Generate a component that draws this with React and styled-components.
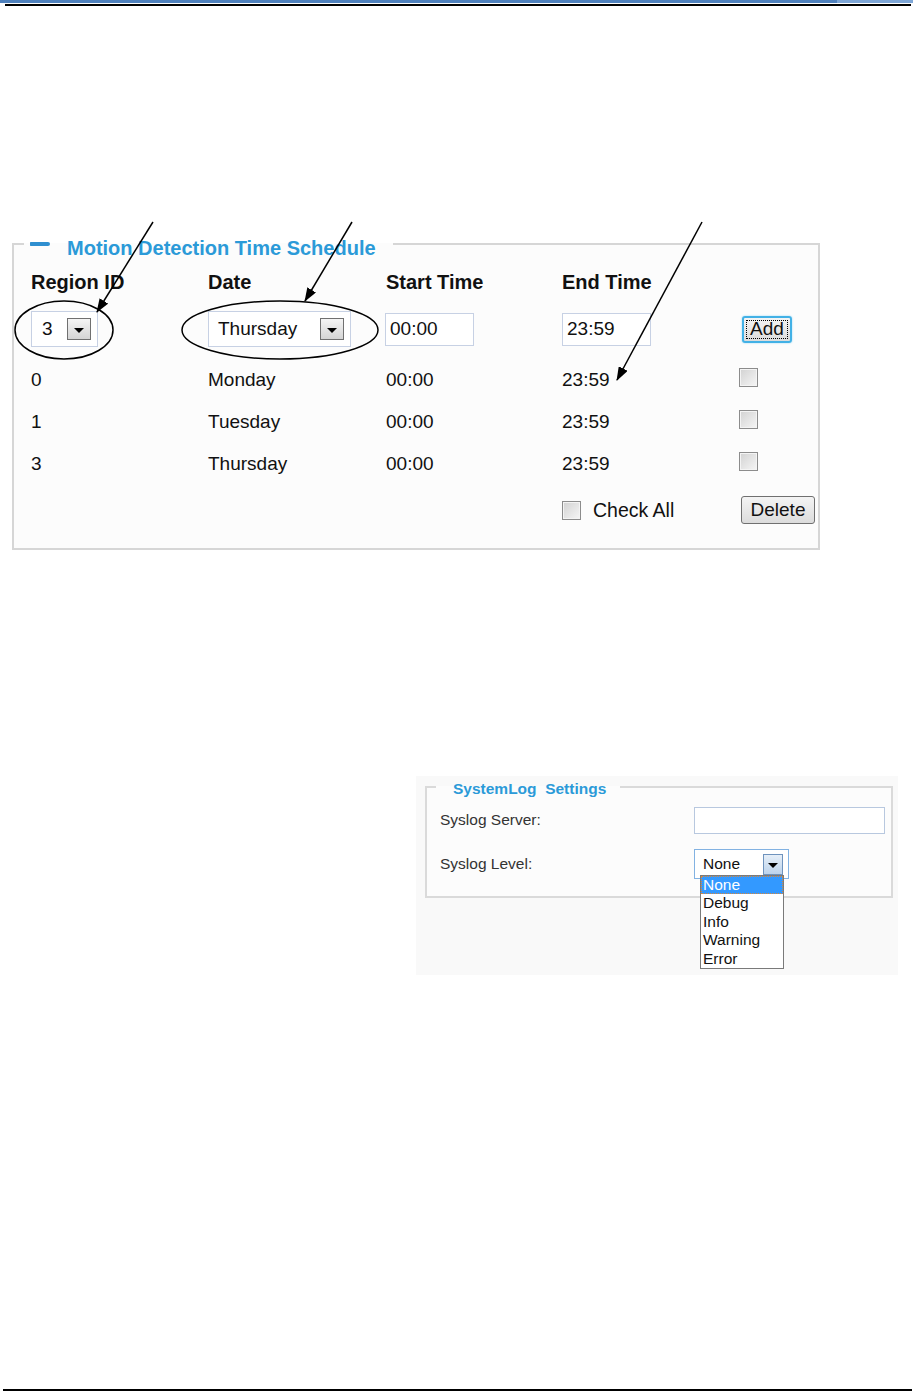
import React from 'react';
import styled, { createGlobalStyle } from 'styled-components';

const Global = createGlobalStyle`
  html, body { margin: 0; padding: 0; background: #fff; }
  body { font-family: "Liberation Sans", Arial, sans-serif; color: #111; }
`;

const Page = styled.div`
  position: relative;
  width: 915px;
  height: 1393px;
  overflow: hidden;
  display: flex;
  flex-direction: column;
`;

const TopBar = styled.div`
  height: 3px;
  background: linear-gradient(to right, #4f81bd 0 837px, #7ea6d6 837px 913px, transparent 913px);
`;

const Rule = styled.div`
  height: 2px;
  background: #000;
  margin: ${(p) => p.$m};
`;

const Fieldset = styled.fieldset`
  box-sizing: border-box;
  margin: ${(p) => p.$margin || 0};
  width: ${(p) => p.$w}px;
  border: 2px solid ${(p) => p.$border || '#d6d6d6'};
  background: #fcfcfc;
  padding: ${(p) => p.$pad};
  min-inline-size: 0;
`;

const Legend = styled.legend`
  display: flex;
  align-items: flex-start;
  gap: 17px;
  margin-left: ${(p) => p.$ml}px;
  padding: ${(p) => p.$pad};
  font-weight: bold;
  font-size: ${(p) => p.$size}px;
  line-height: ${(p) => p.$lh}px;
  color: #2b9ad8;
  white-space: pre;
`;

const MinusIcon = styled.span`
  display: block;
  width: 20px;
  height: 4px;
  margin-top: 5px;
  border-radius: 1px 3px 3px 1px;
  background: #2f8fd0;
`;

const Grid = styled.div`
  display: grid;
  grid-template-columns: 177px 178px 176px 177px 1fr;
  align-items: center;
  height: ${(p) => p.$h}px;
  margin-top: ${(p) => p.$mt}px;
  font-size: ${(p) => (p.$bold ? 20 : 19)}px;
  font-weight: ${(p) => (p.$bold ? 'bold' : 'normal')};
`;

const Select = styled.div`
  box-sizing: border-box;
  display: flex;
  align-items: center;
  justify-content: space-between;
  width: ${(p) => p.$w}px;
  height: 36px;
  border: 1px solid #c7d1e4;
  background: #fff;
  padding: 0 6px 0 ${(p) => p.$pl}px;
  font-size: 19px;
`;

const ArrowBtn = styled.span`
  box-sizing: border-box;
  display: flex;
  align-items: center;
  justify-content: center;
  width: ${(p) => p.$w || 24}px;
  height: ${(p) => p.$h || 22}px;
  border: 1px solid ${(p) => (p.$blue ? '#6f93bd' : '#707070')};
  background: ${(p) =>
    p.$blue ? 'linear-gradient(#e6eff8, #bcd3ec)' : 'linear-gradient(#f5f5f5, #d4d4d4)'};
  &::after {
    content: '';
    border-left: 5px solid transparent;
    border-right: 5px solid transparent;
    border-top: 5px solid #000;
    margin-top: 2px;
  }
`;

const TextInput = styled.input`
  box-sizing: border-box;
  width: ${(p) => p.$w}px;
  height: ${(p) => p.$h}px;
  border: 1px solid ${(p) => p.$border || '#c7d1e4'};
  background: #fff;
  padding: 0 0 0 4px;
  margin: 0;
  font-family: "Liberation Sans", Arial, sans-serif;
  font-size: 19px;
  color: #111;
  outline: none;
`;

const Button = styled.button`
  box-sizing: border-box;
  height: ${(p) => p.$h}px;
  width: ${(p) => p.$w}px;
  margin: 0 0 0 ${(p) => p.$ml}px;
  padding: 0;
  border: ${(p) => (p.$focus ? '2px solid #42b1e6' : '1px solid #707070')};
  border-radius: 3px;
  background: linear-gradient(#f4f4f4, #dcdcdc);
  box-shadow: ${(p) => (p.$focus ? '0 0 2px #8fd4f5' : 'none')};
  outline: ${(p) => (p.$focus ? '1px dotted #000' : 'none')};
  outline-offset: -5px;
  font-family: "Liberation Sans", Arial, sans-serif;
  font-size: 19px;
  color: #111;
`;

const Check = styled.span`
  box-sizing: border-box;
  display: inline-block;
  width: 19px;
  height: 19px;
  border: 1px solid #8c8c8c;
  box-shadow: inset 0 0 0 1px #f4f4f4;
  background: linear-gradient(135deg, #d2d2d2, #f6f6f6);
`;

const CheckAll = styled.div`
  display: flex;
  align-items: center;
  gap: 12px;
  font-size: 19.5px;
`;

const Shot = styled.div`
  margin: ${(p) => p.$m};
  width: ${(p) => p.$w}px;
  height: ${(p) => p.$h}px;
  background: #f9f9f9;
  padding: ${(p) => p.$pad};
  box-sizing: border-box;
`;

const FormRow = styled.div`
  display: grid;
  grid-template-columns: 254px 1fr;
  align-items: center;
  height: 34px;
  margin-top: ${(p) => p.$mt}px;
  font-size: 15.5px;
  color: #333;
`;

const LevelSelect = styled.div`
  position: relative;
  box-sizing: border-box;
  display: flex;
  align-items: center;
  justify-content: space-between;
  width: 95px;
  height: 30px;
  border: 1px solid #82b2e2;
  background: #fff;
  padding: 0 5px 0 8px;
  font-size: 15.5px;
  color: #111;
`;

const DropList = styled.ul`
  position: absolute;
  top: 25px;
  left: 5px;
  width: 84px;
  box-sizing: border-box;
  margin: 0;
  padding: 0;
  list-style: none;
  background: #fff;
  border: 1px solid #7a7a7a;
  z-index: 2;
`;

const DropItem = styled.li`
  height: 18.4px;
  line-height: 18.4px;
  padding-left: 2px;
  font-size: 15.5px;
  color: ${(p) => (p.$active ? '#fff' : '#111')};
  background: ${(p) => (p.$active ? '#3399ff' : 'transparent')};
  outline: ${(p) => (p.$active ? '1px dotted #d8873a' : 'none')};
  outline-offset: -1px;
`;

const Annotations = styled.svg`
  position: absolute;
  left: 0;
  top: 0;
  pointer-events: none;
`;

const rows = [
  ['0', 'Monday', '00:00', '23:59'],
  ['1', 'Tuesday', '00:00', '23:59'],
  ['3', 'Thursday', '00:00', '23:59'],
];

const levels = ['None', 'Debug', 'Info', 'Warning', 'Error'];

export default function App() {
  return (
    <Page>
      <Global />
      <TopBar />
      <Rule $m="1px 4px 0 5px" />

      <Fieldset $w={808} $margin="223px 0 0 12px" $pad="0 0 17px 17px">
        <Legend $ml={-7} $pad="8px 17px 0 6px" $size={20} $lh={22}>
          <MinusIcon />
          Motion Detection Time Schedule
        </Legend>
        <Grid $h={30} $mt={8} $bold>
          <span>Region ID</span>
          <span>Date</span>
          <span>Start Time</span>
          <span>End Time</span>
          <span />
        </Grid>
        <Grid $h={36} $mt={14}>
          <Select $w={67} $pl={10}>
            3<ArrowBtn />
          </Select>
          <Select $w={143} $pl={9}>
            Thursday<ArrowBtn />
          </Select>
          <TextInput $w={89} $h={33} readOnly defaultValue="00:00" style={{ marginLeft: -1 }} />
          <TextInput $w={89} $h={33} readOnly defaultValue="23:59" />
          <Button $w={50} $h={27} $ml={3} $focus>Add</Button>
        </Grid>
        {rows.map((r, i) => (
          <Grid key={i} $h={42} $mt={i === 0 ? 12 : 0}>
            <span>{r[0]}</span>
            <span>{r[1]}</span>
            <span>{r[2]}</span>
            <span>{r[3]}</span>
            <span><Check /></span>
          </Grid>
        ))}
        <Grid $h={42} $mt={4}>
          <span />
          <span />
          <span />
          <CheckAll>
            <Check />
            Check All
          </CheckAll>
          <Button $w={74} $h={28} $ml={2}>Delete</Button>
        </Grid>
      </Fieldset>

      <Shot $m="226px 0 0 416px" $w={482} $h={199} $pad="0 0 0 9px">
        <Fieldset $w={468} $border="#dadada" $pad="0 0 15px 13px">
          <Legend $ml={-4} $pad="4px 14px 0 17px" $size={15.5} $lh={18}>
            SystemLog  Settings
          </Legend>
          <FormRow $mt={5}>
            <span>Syslog Server:</span>
            <TextInput $w={191} $h={27} $border="#b8c8df" readOnly defaultValue="" />
          </FormRow>
          <FormRow $mt={10}>
            <span>Syslog Level:</span>
            <LevelSelect>
              None
              <ArrowBtn $w={20} $h={21} $blue />
              <DropList>
                {levels.map((l, i) => (
                  <DropItem key={l} $active={i === 0}>{l}</DropItem>
                ))}
              </DropList>
            </LevelSelect>
          </FormRow>
        </Fieldset>
      </Shot>

      <Rule $m="auto 3px 2px 3px" />

      <Annotations width="915" height="600" viewBox="0 0 915 600">
        <defs>
          <marker id="head" markerUnits="userSpaceOnUse" markerWidth="14" markerHeight="10"
            refX="13" refY="5" orient="auto">
            <path d="M0,0 L14,5 L0,10 z" fill="#000" />
          </marker>
        </defs>
        <g stroke="#000" strokeWidth="1.5" fill="none">
          <line x1="153" y1="222" x2="97" y2="312" markerEnd="url(#head)" />
          <line x1="352" y1="222" x2="305" y2="301" markerEnd="url(#head)" />
          <line x1="702" y1="222" x2="617" y2="380" markerEnd="url(#head)" />
          <ellipse cx="64" cy="330" rx="49" ry="29" />
          <ellipse cx="280" cy="330" rx="98" ry="29" />
        </g>
      </Annotations>
    </Page>
  );
}
